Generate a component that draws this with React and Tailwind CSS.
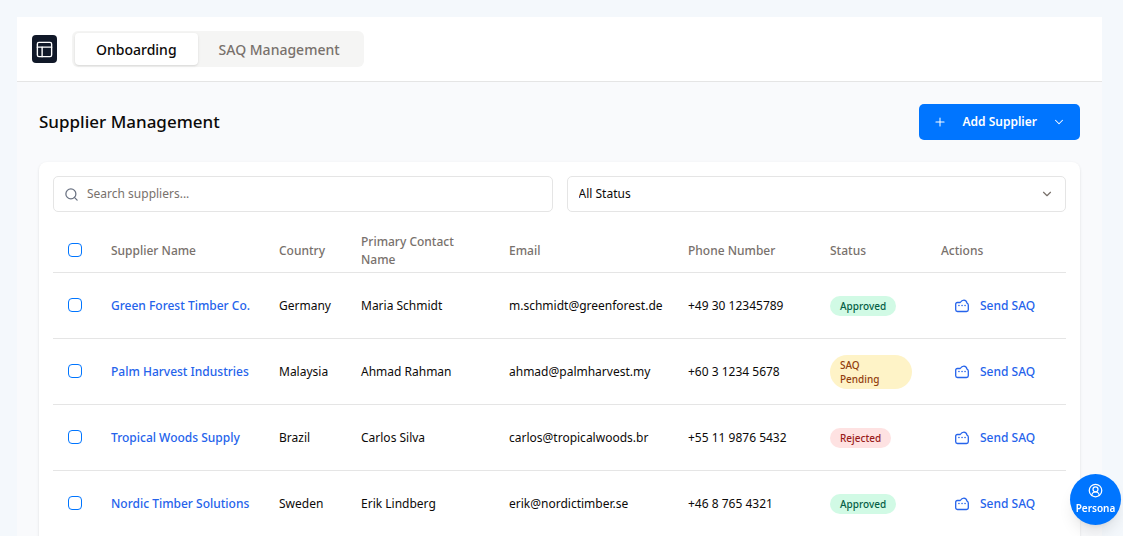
import React from "react";
import { ChevronDown, CircleUserRound, PanelsTopLeft, Plus, Search } from "lucide-react";

const suppliers = [
  { name: "Green Forest Timber Co.", country: "Germany", contact: "Maria Schmidt", email: "m.schmidt@greenforest.de", phone: "+49 30 12345789", status: "Approved" },
  { name: "Palm Harvest Industries", country: "Malaysia", contact: "Ahmad Rahman", email: "ahmad@palmharvest.my", phone: "+60 3 1234 5678", status: "SAQ Pending" },
  { name: "Tropical Woods Supply", country: "Brazil", contact: "Carlos Silva", email: "carlos@tropicalwoods.br", phone: "+55 11 9876 5432", status: "Rejected" },
  { name: "Nordic Timber Solutions", country: "Sweden", contact: "Erik Lindberg", email: "erik@nordictimber.se", phone: "+46 8 765 4321", status: "Approved" },
];

const badgeStyles = {
  Approved: "bg-[#d1fae5] text-[#065f46]",
  "SAQ Pending": "w-[82px] bg-[#fef3c7] pr-6 text-[#92400e]",
  Rejected: "bg-[#fee2e2] text-[#991b1b]",
};

const checkboxClass =
  "block size-[14px] appearance-none rounded-[4px] border border-[#0075ff] bg-white checked:bg-[#0075ff]";

function SendIcon() {
  return (
    <svg viewBox="0 0 14 14" className="size-[14px]" fill="none" stroke="currentColor" strokeLinecap="round" strokeLinejoin="round" aria-hidden="true">
      <path d="M5.2 3.5H2.4C1.3 3.5 0.7 4.100 0.7 5.200v5.500c0 1.100.7 1.800 1.800 1.800h9c1.100 0 1.800-.7 1.800-1.800V6c0-.9-.4-1.500-1.300-1.800C11.700 2.300 10.500 1.100 8.900 1.100c-1.700 0-2.700.9-3.700 2.400Z" strokeWidth="1.300" />
      <path d="M3.900 6.500h.1M7 6.500h.1M10 6.500h.1" strokeWidth="1.500" />
    </svg>
  );
}

function Head({ children }) {
  return <th className="px-[14px] pt-1 text-left align-middle text-[12px] leading-[18px] font-medium text-[#78716c]">{children}</th>;
}

function SupplierRow({ supplier }) {
  return (
    <tr className="h-[66px] border-b border-neutral-200">
      <td className="px-[15px]">
        <input type="checkbox" aria-label={`Select ${supplier.name}`} className={checkboxClass} />
      </td>
      <td className="px-[14px] pt-[2px] font-medium whitespace-nowrap">
        <a href="#supplier" className="text-[#2563eb]">{supplier.name}</a>
      </td>
      <td className="px-[14px] pt-[2px]">{supplier.country}</td>
      <td className="px-[14px] pt-[2px]">{supplier.contact}</td>
      <td className="px-[14px] pt-[2px] whitespace-nowrap">{supplier.email}</td>
      <td className="px-[14px] pt-[2px] whitespace-nowrap">{supplier.phone}</td>
      <td className="px-[14px] pt-[2px]">
        <span className={`inline-block rounded-full px-[10px] py-[3px] align-middle text-[10px] leading-[14px] font-medium ${badgeStyles[supplier.status]}`}>
          {supplier.status}
        </span>
      </td>
      <td className="px-[14px] pt-[2px]">
        <button type="button" className="flex h-8 items-center gap-[11px] px-[14px] font-medium whitespace-nowrap text-[#2563eb]">
          <SendIcon />
          Send SAQ
        </button>
      </td>
    </tr>
  );
}

export default function App() {
  return (
    <div className="h-screen overflow-y-auto bg-[#f4f8fc] pt-[17px] pr-[21px] pl-[17px] font-['Noto_Sans',sans-serif] text-[12px] text-stone-950 [scrollbar-width:none]">
      <div className="bg-[#f9fafc]">
        <header className="flex items-center gap-[15px] border-b border-neutral-200 bg-white px-[15px] py-[14px]">
          <button type="button" aria-label="Home" className="flex h-7 w-[25px] items-center justify-center rounded-[4px] bg-gray-900 text-white">
            <PanelsTopLeft size={19} strokeWidth={1.75} />
          </button>
          <nav className="flex h-9 items-center rounded-md bg-stone-100 p-[3px] text-[14px] font-medium">
            <button type="button" className="flex h-8 items-center rounded bg-white px-[21px] shadow-sm">Onboarding</button>
            <button type="button" className="flex h-8 items-center rounded px-[21px] text-[#78716c]">SAQ Management</button>
          </nav>
        </header>

        <main className="flex flex-col gap-[22px] px-[22px] pt-[22px]">
          <div className="flex items-center justify-between">
            <h1 className="text-[17px] font-medium">Supplier Management</h1>
            <button type="button" className="flex h-9 items-center gap-[15px] rounded-[5px] bg-[#0075ff] px-[14px] font-semibold text-white">
              <Plus size={14} strokeWidth={1.75} />
              Add Supplier
              <ChevronDown size={14} strokeWidth={1.75} />
            </button>
          </div>

          <section className="rounded-lg bg-white p-[14px] shadow-sm">
            <div className="mb-[14px] grid grid-cols-2 gap-[14px]">
              <label className="flex h-9 items-center gap-2 rounded-[5px] border border-neutral-200 bg-white px-[10px]">
                <Search size={15} strokeWidth={2} className="text-gray-500" />
                <input type="text" aria-label="Search suppliers" placeholder="Search suppliers..." className="min-w-0 flex-1 outline-none placeholder:text-[#78716c]" />
              </label>
              <div className="relative">
                <select aria-label="Status" className="h-9 w-full appearance-none rounded-[5px] border border-neutral-200 bg-white px-[11px]">
                  <option>All Status</option>
                  <option>Approved</option>
                  <option>SAQ Pending</option>
                  <option>Rejected</option>
                </select>
                <ChevronDown size={14} strokeWidth={2} className="pointer-events-none absolute top-[11px] right-[12px] text-stone-500" />
              </div>
            </div>

            <table className="w-full table-fixed border-collapse">
              <colgroup>
                <col className="w-[44px]" />
                <col className="w-[168px]" />
                <col className="w-[82px]" />
                <col className="w-[148px]" />
                <col className="w-[179px]" />
                <col className="w-[142px]" />
                <col className="w-[111px]" />
                <col className="w-[139px]" />
              </colgroup>
              <thead>
                <tr className="h-[46px] border-b border-neutral-200">
                  <th className="px-[15px] pt-[2px]">
                    <input type="checkbox" aria-label="Select all suppliers" className={checkboxClass} />
                  </th>
                  <Head>Supplier Name</Head>
                  <Head>Country</Head>
                  <Head>Primary Contact Name</Head>
                  <Head>Email</Head>
                  <Head>Phone Number</Head>
                  <Head>Status</Head>
                  <Head>Actions</Head>
                </tr>
              </thead>
              <tbody>
                {suppliers.map((supplier) => (
                  <SupplierRow key={supplier.name} supplier={supplier} />
                ))}
              </tbody>
            </table>
          </section>
        </main>
      </div>

      <button type="button" className="fixed right-[2px] bottom-[11px] flex size-[51px] flex-col items-center justify-center gap-[2px] rounded-full bg-[#0075ff] text-[10px] leading-[16px] font-semibold text-white shadow-lg">
        <CircleUserRound size={15} strokeWidth={2} />
        Persona
      </button>
    </div>
  );
}
